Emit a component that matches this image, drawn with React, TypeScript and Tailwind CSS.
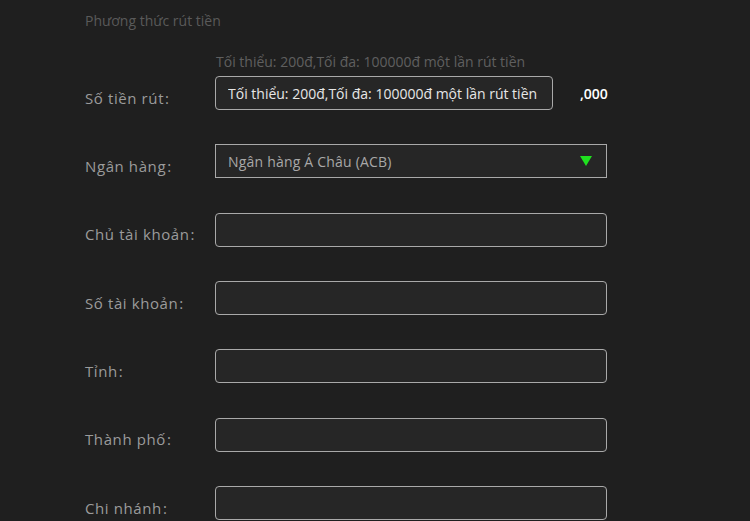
import { useState } from 'react'

const FONT = { fontFamily: '"Open Sans", "Noto Sans", sans-serif' }

const FIELDS = ['Chủ tài khoản', 'Số tài khoản', 'Tỉnh', 'Thành phố', 'Chi nhánh']

function Label({ text }: { text: string }) {
  return (
    <label className="w-[130px] shrink-0 pt-[10px] text-[15px] tracking-[0.6px] text-[#9b9b9b]">
      {text}
      <span className="ml-[1px]">:</span>
    </label>
  )
}

export default function App() {
  const [values, setValues] = useState<Record<string, string>>({})

  return (
    <div className="h-[521px] w-[750px] overflow-hidden bg-[#1f1f1f] pl-[85px]" style={FONT}>
      <div className="pt-[11px] text-[14px] leading-5 text-[#5a5a5a]">Phương thức rút tiền</div>

      <div className="ml-[131px] mt-[22px] text-[14px] leading-[18px] text-[#5f5f5f]">
        Tối thiểu: 200đ,Tối đa: 100000đ một lần rút tiền
      </div>

      <div className="mt-[5px] flex flex-col gap-[34.33px]">
        {/* Số tiền rút */}
        <div className="flex items-center">
          <Label text="Số tiền rút" />
          <input
            className="h-[34px] w-[338px] rounded-[4px] border border-[#a9a9a9] bg-[#262626] px-[12px] text-[14px] text-[#e6e6e6] outline-none placeholder:text-[#e6e6e6]"
            placeholder="Tối thiểu: 200đ,Tối đa: 100000đ một lần rút tiền"
          />
          <span className="ml-[27px] text-[14px] font-semibold text-white">,000</span>
        </div>

        {/* Ngân hàng */}
        <div className="flex items-center">
          <Label text="Ngân hàng" />
          <div className="flex h-[34px] w-[392px] items-center justify-between border border-[#a9a9a9] bg-[#262626] pl-[12px] pr-[14px]">
            <span className="text-[14px] tracking-[0.2px] text-[#a8a8a8]">Ngân hàng Á Châu (ACB)</span>
            <svg width="12" height="10" viewBox="0 0 12 10">
              <polygon points="0,0 12,0 6,10" fill="#1fe01f" />
            </svg>
          </div>
        </div>

        {FIELDS.map((f) => (
          <div key={f} className="flex items-center">
            <Label text={f} />
            <input
              className="h-[34px] w-[392px] rounded-[4px] border border-[#a9a9a9] bg-[#262626] px-[12px] text-[14px] text-[#e6e6e6] outline-none"
              value={values[f] ?? ''}
              onChange={(e) => setValues({ ...values, [f]: e.target.value })}
            />
          </div>
        ))}
      </div>
    </div>
  )
}
